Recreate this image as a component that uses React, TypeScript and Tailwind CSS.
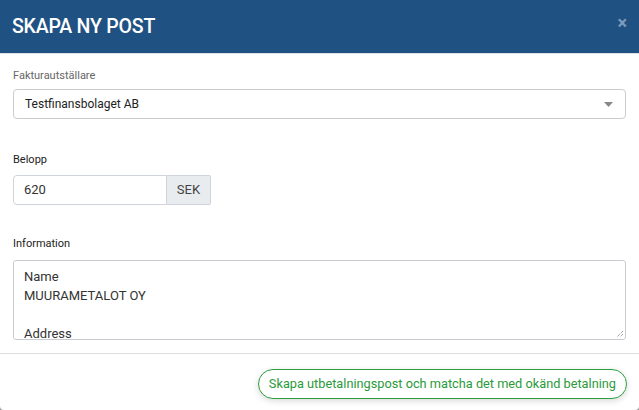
export default function App() {
  return (
    <div className="h-[410px] w-[639px] bg-[#9a9a9a] font-['Roboto',sans-serif]">
      <div className="flex h-full flex-col overflow-hidden rounded-b-[4px] bg-white">
        <div className="flex h-[54px] items-center justify-between border-b border-[#dee2e6] bg-[#1f5282] pl-[12px] pr-[12px]">
          <h1 className="text-[19.5px] font-medium leading-none tracking-[-0.2px] text-white">SKAPA NY POST</h1>
          <button className="pb-[8px] text-[18px] font-bold leading-none text-[#7d9cbd]">×</button>
        </div>

        <div className="flex flex-1 flex-col px-[13px] pt-[15px]">
          <label className="text-[11px] leading-[13px] text-[#666]">Fakturautställare</label>
          <div className="mt-[7px] flex h-[30px] items-center justify-between rounded-[4px] border border-[#ccc] pl-[11px] pr-[12px]">
            <span className="text-[12px] text-[#222]">Testfinansbolaget AB</span>
            <svg width="9" height="5" viewBox="0 0 9 5">
              <path d="M0 0h9L4.5 5z" fill="#888" />
            </svg>
          </div>

          <label className="mt-[34px] text-[11px] leading-[13px] text-[#222]">Belopp</label>
          <div className="mt-[9px] flex h-[30px]">
            <div className="flex w-[154px] items-center rounded-l-[4px] border border-[#ced4da] pl-[10px] text-[13px] text-[#333]">
              620
            </div>
            <div className="flex w-[44px] items-center justify-center rounded-r-[2px] border border-l-0 border-[#ced4da] bg-[#e9ecef] text-[13px] text-[#444]">
              SEK
            </div>
          </div>

          <label className="mt-[32px] text-[11px] leading-[13px] text-[#222]">Information</label>
          <div className="relative mt-[10px] h-[80px] overflow-hidden rounded-[3px] border border-[#c8ccd0] pl-[10px] pt-[6px] text-[13px] leading-[19px] text-[#333]">
            <div>Name</div>
            <div>MUURAMETALOT OY</div>
            <div>&nbsp;</div>
            <div>Address</div>
            <svg className="absolute bottom-[1px] right-[1px]" width="9" height="9" viewBox="0 0 9 9">
              <path d="M8 2L2 8M8 5L5 8" stroke="#777" strokeWidth="1" strokeDasharray="1 1" />
            </svg>
          </div>
        </div>

        <div className="flex h-[57px] items-start justify-end border-t border-[#ddd] pr-[12px] pt-[15px]">
          <button className="h-[30px] rounded-full border border-[#2e9e3e] bg-white px-[10px] text-[12.75px] text-[#2a9a3a] shadow-[0_2px_6px_rgba(0,0,0,0.15)]">
            Skapa utbetalningspost och matcha det med okänd betalning
          </button>
        </div>
      </div>
    </div>
  );
}
